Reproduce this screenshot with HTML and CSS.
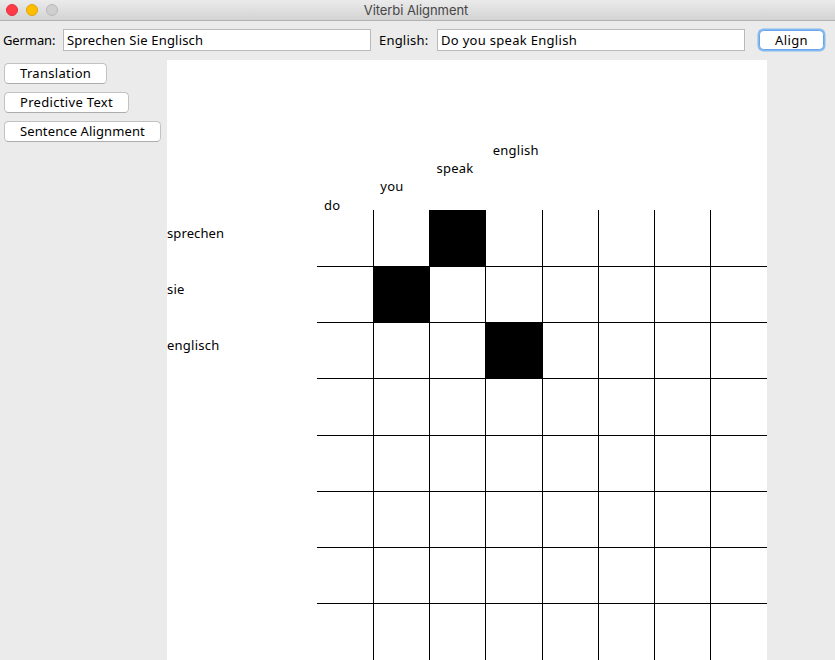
FILE: index.html
```
<!DOCTYPE html>
<html lang="en">
<head>
<meta charset="utf-8">
<title>Viterbi Alignment</title>
<link rel="stylesheet" href="styles.css">
</head>
<body>
<header class="titlebar">
  <div class="lights"><i class="light close"></i><i class="light minimize"></i><i class="light disabled"></i></div>
  <h1 class="title">Viterbi Alignment</h1>
</header>
<form class="toolbar">
  <span class="label german">German:</span>
  <div class="field source">Sprechen Sie Englisch</div>
  <span class="label english">English:</span>
  <div class="field target">Do you speak English</div>
  <button type="button" class="button align"><span>Align</span></button>
</form>
<div class="content">
  <nav class="sidebar">
    <button type="button" class="button translation"><span>Translation</span></button>
    <button type="button" class="button predictive"><span>Predictive Text</span></button>
    <button type="button" class="button sentence"><span>Sentence Alignment</span></button>
  </nav>
  <main class="canvas">
    <div class="columns">
      <span class="step1">do</span><span class="step2">you</span><span class="step3">speak</span><span class="step4">english</span>
    </div>
    <div class="rows"><span class="long">sprechen</span><span>sie</span><span>englisch</span></div>
    <svg class="matrix" width="450" height="450" viewBox="0 0 450 450" shape-rendering="crispEdges">
      <path d="M112 0h57v57h-57zM56 56h57v57H56zM168 112h58v57h-58z"/>
      <path d="M56 0h1v450h-1zM112 0h1v450h-1zM168 0h1v450h-1zM225 0h1v450h-1zM281 0h1v450h-1zM337 0h1v450h-1zM393 0h1v450h-1z"/>
      <path d="M0 56h450v1H0zM0 112h450v1H0zM0 168h450v1H0zM0 225h450v1H0zM0 281h450v1H0zM0 337h450v1H0zM0 393h450v1H0z"/>
    </svg>
  </main>
</div>
</body>
</html>
```

FILE: styles.css
```
* { box-sizing: border-box; }
html, body { height: 100%; }
body {
  margin: 0;
  overflow: hidden;
  background: #ebebeb;
  color: #000;
  font: 13px/18px "Noto Sans", "Open Sans", sans-serif;
  white-space: nowrap;
}
.titlebar {
  display: grid;
  grid-template-columns: 1fr auto 1fr;
  height: 21px;
  border-bottom: 1px solid #b1b1b1;
  border-top-right-radius: 4px;
  background: linear-gradient(#ebebeb, #d3d3d3);
}
.lights { display: flex; gap: 8px; padding: 4px 0 0 6px; }
.light { width: 12px; height: 12px; border: 1px solid; border-radius: 50%; }
.close { background: #ff3b47; border-color: #e2323d; }
.minimize { background: #ffbd00; border-color: #e2a20a; }
.disabled { background: #cfcfcf; border-color: #b9b9b9; }
.title {
  margin: 0 3px 0 0;
  color: #464646;
  font: 13px/20px Inter, Roboto, sans-serif;
  letter-spacing: -0.06px;
}
.toolbar { display: flex; align-items: flex-start; height: 39px; padding-top: 8px; }
.label { padding: 2px 0 0 3px; }
.label.german { width: 63px; letter-spacing: -0.1px; }
.label.english { width: 66px; padding-left: 8px; letter-spacing: 0.2px; }
.field {
  width: 308px;
  height: 22px;
  padding: 1px 3px;
  border: 1px solid #b9b9b9;
  background: #fff;
}
.source { letter-spacing: 0.19px; }
.target { letter-spacing: 0.3px; }
.button {
  display: block;
  height: 21px;
  padding: 0 0 2px 15px;
  border: 1px solid #c2c2c2;
  border-bottom-color: #adadad;
  border-radius: 4.5px;
  background: #fff;
  color: #000;
  font: inherit;
  text-align: left;
}
.button.align {
  width: 65px;
  height: 20px;
  margin: 1px 0 0 14px;
  padding-bottom: 3px;
  letter-spacing: 0.4px;
  border-color: #6ca6ea;
  box-shadow: 0 0 0 1.5px #83b8f3;
}
.content { display: flex; height: 600px; }
.sidebar {
  display: flex;
  flex-direction: column;
  gap: 8px;
  width: 167px;
  padding: 3px 0 0 4px;
}
.translation { width: 103px; letter-spacing: 0.3px; }
.predictive { width: 125px; letter-spacing: 0.32px; }
.sentence { width: 157px; letter-spacing: 0.12px; }
.canvas {
  display: grid;
  grid-template: 150px 450px / 150px 450px;
  width: 600px;
  background: #fff;
  letter-spacing: 0.25px;
}
.columns {
  grid-column: 2;
  display: grid;
  grid-template-columns: repeat(8, 56.25px);
  align-items: end;
  padding-left: 7px;
}
.step1 { margin-bottom: -4px; }
.step2 { margin-bottom: 15px; }
.step3 { margin-bottom: 33px; }
.step4 { margin-bottom: 51px; }
.rows { display: grid; grid-auto-rows: 56px; align-content: start; padding-top: 14px; }
.rows .long { letter-spacing: 0.1px; }
.matrix { display: block; }
```
